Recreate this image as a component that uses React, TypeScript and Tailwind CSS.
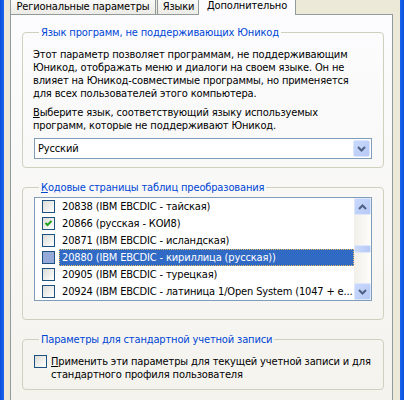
import React from "react";

const FONT = "font-['DejaVu_Sans_Condensed','DejaVu_Sans',sans-serif] text-[11px] tracking-[-0.15px] leading-[13px]";

function Chevron({ up = false }: { up?: boolean }) {
  return (
    <svg width="9" height="6" viewBox="0 0 9 6" className={up ? "rotate-180" : ""}>
      <path d="M1 1 L4.5 4.5 L8 1" stroke="#4D6185" strokeWidth="2" fill="none" />
    </svg>
  );
}

function XPButton({ up = false, cls = "" }: { up?: boolean; cls?: string }) {
  return (
    <div
      className={`flex items-center justify-center rounded-[2px] border border-[#DCE6FD] bg-gradient-to-br from-[#CAD9FC] to-[#B6C9F5] ${cls}`}
    >
      <Chevron up={up} />
    </div>
  );
}

function Check({ checked = false, sel = false }: { checked?: boolean; sel?: boolean }) {
  return (
    <div
      className={`w-[13px] h-[13px] shrink-0 border border-[#1C5180] flex items-center justify-center ${
        sel ? "bg-[#95AAD9]" : "bg-gradient-to-br from-[#DCDCD7] to-[#FFFFFF]"
      }`}
    >
      {checked && (
        <svg width="9" height="9" viewBox="0 0 9 9">
          <path d="M1.5 4 L3.5 6 L7.5 2" stroke="#21A121" strokeWidth="2" fill="none" />
        </svg>
      )}
    </div>
  );
}

const items = [
  { t: "20838 (IBM EBCDIC - тайская)" },
  { t: "20866 (русская - КОИ8)", c: true },
  { t: "20871 (IBM EBCDIC - исландская)" },
  { t: "20880 (IBM EBCDIC - кириллица (русская))", s: true },
  { t: "20905 (IBM EBCDIC - турецкая)" },
  { t: "20924 (IBM EBCDIC - латиница 1/Open System (1047 + e..." },
];

export default function App() {
  return (
    <div className={`w-[404px] h-[400px] overflow-hidden flex bg-[#ECE9D8] text-black ${FONT}`}>
      <div className="w-[4px] shrink-0 bg-gradient-to-r from-[#0A4FDB] to-[#1C66EE]" />
      <div className="w-[396px] shrink-0 pl-[6px]">
        {/* tabs */}
        <div className="h-[14px] flex items-end">
          <div className="w-[146px] h-[20px] shrink-0 flex items-end justify-center pb-[1px] border border-b-0 border-[#919B9C] rounded-t-[3px] bg-gradient-to-b from-[#FFFFFF] to-[#ECEBE6]">
            Региональные параметры
          </div>
          <div className="w-[43px] h-[20px] ml-[1px] shrink-0 flex items-end justify-center pb-[1px] border border-b-0 border-[#919B9C] rounded-t-[3px] bg-gradient-to-b from-[#FFFFFF] to-[#ECEBE6]">
            Языки
          </div>
          <div className="relative z-10 w-[98px] h-[23px] ml-[-2px] mb-[-1px] shrink-0 flex items-end justify-center pb-[3px] border border-b-0 border-[#919B9C] rounded-t-[3px] bg-[#FCFCFE]">
            Дополнительно
          </div>
        </div>
        {/* panel */}
        <div className="w-[383px] h-[420px] border border-[#919B9C] bg-gradient-to-b from-[#FCFCFE] to-[#F3F2EC] pl-[11px] pt-[11px]">
          {/* group 1 */}
          <fieldset className="w-[362px] border border-[#D0D0BF] rounded-[4px] px-[11px] pb-[8px]">
            <legend className="ml-[5px] px-[2px] text-[#0046D5]">Язык программ, не поддерживающих Юникод</legend>
            <div className="mt-[9px] ml-[-1px] whitespace-nowrap">
              <div>Этот параметр позволяет программам, не поддерживающим</div>
              <div>Юникод, отображать меню и диалоги на своем языке. Он не</div>
              <div>влияет на Юникод-совместимые программы, но применяется</div>
              <div>для всех пользователей этого компьютера.</div>
            </div>
            <div className="mt-[6px] ml-[-1px] whitespace-nowrap">
              <div>
                <span className="underline">В</span>ыберите язык, соответствующий языку используемых
              </div>
              <div>программ, которые не поддерживают Юникод.</div>
            </div>
            <div className="mt-[6px] h-[21px] border border-[#7F9DB9] bg-white flex items-center">
              <div className="flex-1 pl-[3px]">Русский</div>
              <XPButton cls="w-[17px] h-[17px] mr-[1px]" />
            </div>
          </fieldset>

          {/* group 2 */}
          <fieldset className="mt-[13px] w-[362px] border border-[#D0D0BF] rounded-[4px] px-[11px] pb-[18px]">
            <legend className="ml-[5px] px-[2px] text-[#0046D5]">
              <span className="underline">К</span>одовые страницы таблиц преобразования
            </legend>
            <div className="mt-[3px] h-[104px] border border-[#7F9DB9] bg-white flex">
              <div className="flex-1 min-w-0">
                {items.map((it, i) => (
                  <div key={i} className="h-[17px] flex items-center pl-[7px]">
                    <Check checked={!!it.c} sel={!!it.s} />
                    <div
                      className={`ml-[4px] flex-1 min-w-0 h-[17px] flex items-center pl-[2px] whitespace-nowrap overflow-hidden border border-dotted ${
                        it.s ? "bg-[#316AC5] text-white border-[#E8C060]" : "border-transparent"
                      }`}
                    >
                      {it.t}
                    </div>
                  </div>
                ))}
              </div>
              <div className="w-[17px] shrink-0 flex flex-col bg-gradient-to-r from-[#F1EFE8] to-[#FDFDFA]">
                <XPButton up cls="w-[17px] h-[17px]" />
                <div className="h-[30px]" />
                <div className="h-[8px] rounded-[2px] border border-[#DCE6FD] bg-gradient-to-r from-[#CAD9FC] to-[#B6C9F5]" />
                <div className="flex-1" />
                <XPButton cls="w-[17px] h-[17px]" />
              </div>
            </div>
          </fieldset>

          {/* group 3 */}
          <fieldset className="mt-[13px] w-[362px] border border-[#D0D0BF] rounded-[4px] px-[11px] pb-[8px]">
            <legend className="ml-[5px] px-[2px] text-[#0046D5]">Параметры для стандартной учетной записи</legend>
            <div className="mt-[9px] flex items-start">
              <Check />
              <div className="ml-[4px] whitespace-nowrap">
                <div>
                  <span className="underline">П</span>рименить эти параметры для текущей учетной записи и для
                </div>
                <div>стандартного профиля пользователя</div>
              </div>
            </div>
          </fieldset>
        </div>
      </div>
      <div className="w-[4px] shrink-0 bg-gradient-to-r from-[#1C66EE] to-[#0A4FDB]" />
    </div>
  );
}
